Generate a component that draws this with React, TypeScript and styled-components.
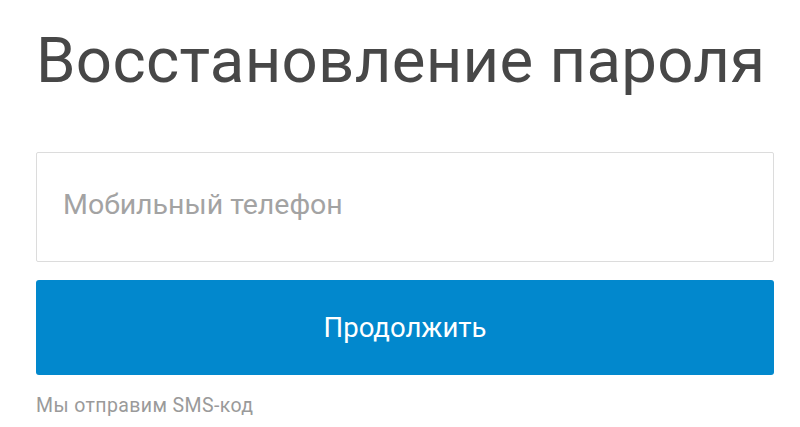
import React from 'react';
import styled, { createGlobalStyle } from 'styled-components';

const GlobalStyle = createGlobalStyle`
  html, body {
    margin: 0;
    padding: 0;
    background: #ffffff;
    font-family: Roboto, 'Noto Sans', sans-serif;
  }
`;

const Page = styled.div`
  width: 800px;
  height: 427px;
  box-sizing: border-box;
  padding: 17px 26px 0 36px;
  display: flex;
  flex-direction: column;
`;

const Title = styled.h1`
  margin: 0;
  font-size: 63.5px;
  font-weight: 400;
  line-height: 88px;
  color: #474747;
  letter-spacing: 0.3px;
  white-space: nowrap;
`;

const PhoneInput = styled.input`
  margin-top: 47px;
  height: 110px;
  box-sizing: border-box;
  padding: 0 26px 6px;
  border: 1.5px solid #dcdcdc;
  border-radius: 2px;
  font-family: Roboto, sans-serif;
  font-size: 28.5px;
  color: #333;
  outline: none;
  &::placeholder {
    color: #a3a3a3;
  }
`;

const SubmitButton = styled.button`
  margin-top: 18px;
  height: 95px;
  border: none;
  border-radius: 3px;
  background: #0288cd;
  color: #ffffff;
  font-family: Roboto, sans-serif;
  font-size: 27.5px;
  font-weight: 400;
  cursor: pointer;
`;

const Hint = styled.p`
  margin: 19px 0 0;
  font-size: 19.5px;
  letter-spacing: 0.4px;
  color: #9a9a9a;
`;

const App = () => {
  return (
    <>
      <GlobalStyle />
      <Page>
        <Title>Восстановление пароля</Title>
        <PhoneInput type="tel" placeholder="Мобильный телефон" />
        <SubmitButton>Продолжить</SubmitButton>
        <Hint>Мы отправим SMS-код</Hint>
      </Page>
    </>
  );
};

export default App;
